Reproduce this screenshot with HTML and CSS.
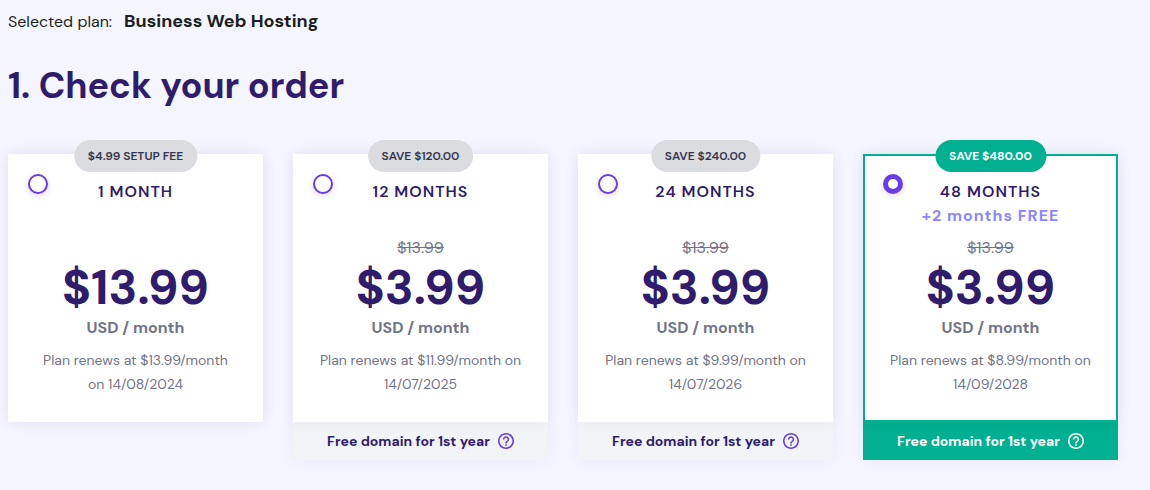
FILE: index.html
```html
<!DOCTYPE html>
<html lang="en">
<head>
<meta charset="utf-8">
<meta name="viewport" content="width=device-width, initial-scale=1">
<title>Check your order</title>
<link rel="stylesheet" href="styles.css">
</head>
<body>
<main class="order">
  <p class="selected-plan">Selected plan: <strong class="plan-name">Business Web Hosting</strong></p>
  <h1 class="heading">1. Check your order</h1>
  <div class="plans">
    <section class="plan">
      <div class="card">
        <span class="badge">$4.99 SETUP FEE</span>
        <div class="card-head">
          <input class="radio" type="radio" name="period" id="period-1">
          <label class="period" for="period-1">1 MONTH</label>
        </div>
        <div class="old-price"></div>
        <div class="price">$13.99</div>
        <div class="unit">USD / month</div>
        <p class="renewal">Plan renews at $13.99/month on 14/08/2024</p>
      </div>
    </section>
    <section class="plan">
      <div class="card">
        <span class="badge">SAVE $120.00</span>
        <div class="card-head">
          <input class="radio" type="radio" name="period" id="period-12">
          <label class="period" for="period-12">12 MONTHS</label>
        </div>
        <div class="old-price"><s>$13.99</s></div>
        <div class="price">$3.99</div>
        <div class="unit">USD / month</div>
        <p class="renewal">Plan renews at $11.99/month on 14/07/2025</p>
      </div>
      <div class="perk">Free domain for 1st year
        <button class="help" type="button" aria-label="About the free domain"><svg class="help-icon" viewBox="2 2 20 20" aria-hidden="true"><path d="M11 18h2v-2h-2v2zm1-16C6.48 2 2 6.48 2 12s4.48 10 10 10 10-4.48 10-10S17.52 2 12 2zm0 18c-4.41 0-8-3.59-8-8s3.59-8 8-8 8 3.59 8 8-3.59 8-8 8zm0-14c-2.21 0-4 1.79-4 4h2c0-1.1.9-2 2-2s2 .9 2 2c0 2-3 1.75-3 5h2c0-2.25 3-2.5 3-5 0-2.21-1.79-4-4-4z"/></svg></button>
      </div>
    </section>
    <section class="plan">
      <div class="card">
        <span class="badge">SAVE $240.00</span>
        <div class="card-head">
          <input class="radio" type="radio" name="period" id="period-24">
          <label class="period" for="period-24">24 MONTHS</label>
        </div>
        <div class="old-price"><s>$13.99</s></div>
        <div class="price">$3.99</div>
        <div class="unit">USD / month</div>
        <p class="renewal">Plan renews at $9.99/month on 14/07/2026</p>
      </div>
      <div class="perk">Free domain for 1st year
        <button class="help" type="button" aria-label="About the free domain"><svg class="help-icon" viewBox="2 2 20 20" aria-hidden="true"><path d="M11 18h2v-2h-2v2zm1-16C6.48 2 2 6.48 2 12s4.48 10 10 10 10-4.48 10-10S17.52 2 12 2zm0 18c-4.41 0-8-3.59-8-8s3.59-8 8-8 8 3.59 8 8-3.59 8-8 8zm0-14c-2.21 0-4 1.79-4 4h2c0-1.1.9-2 2-2s2 .9 2 2c0 2-3 1.75-3 5h2c0-2.25 3-2.5 3-5 0-2.21-1.79-4-4-4z"/></svg></button>
      </div>
    </section>
    <section class="plan plan-active">
      <div class="card">
        <span class="badge">SAVE $480.00</span>
        <div class="card-head">
          <input class="radio" type="radio" name="period" id="period-48" checked>
          <label class="period" for="period-48">48 MONTHS <span class="bonus">+2 months FREE</span></label>
        </div>
        <div class="old-price"><s>$13.99</s></div>
        <div class="price">$3.99</div>
        <div class="unit">USD / month</div>
        <p class="renewal">Plan renews at $8.99/month on 14/09/2028</p>
      </div>
      <div class="perk">Free domain for 1st year
        <button class="help" type="button" aria-label="About the free domain"><svg class="help-icon" viewBox="2 2 20 20" aria-hidden="true"><path d="M11 18h2v-2h-2v2zm1-16C6.48 2 2 6.48 2 12s4.48 10 10 10 10-4.48 10-10S17.52 2 12 2zm0 18c-4.41 0-8-3.59-8-8s3.59-8 8-8 8 3.59 8 8-3.59 8-8 8zm0-14c-2.21 0-4 1.79-4 4h2c0-1.1.9-2 2-2s2 .9 2 2c0 2-3 1.75-3 5h2c0-2.25 3-2.5 3-5 0-2.21-1.79-4-4-4z"/></svg></button>
      </div>
    </section>
  </div>
</main>
</body>
</html>
```
FILE: styles.css
```css
* {
  box-sizing: border-box;
}

body {
  margin: 0;
  background: #f4f5ff;
  color: #1d1e20;
  font-family: "DM Sans", Inter, sans-serif;
  font-size: 16px;
  font-optical-sizing: none;
  line-height: 24px;
}

.order {
  padding: 9px 32px 30px 8px;
}

.selected-plan {
  display: flex;
  align-items: baseline;
  gap: 12px;
  margin: 0;
  font-weight: 400;
}

.plan-name {
  font-size: 18px;
  font-weight: 700;
}

.heading {
  margin: 28px 0 44px;
  color: #2f1c6a;
  font-size: 36px;
  font-weight: 700;
  line-height: 48px;
}

.plans {
  display: grid;
  grid-template-columns: repeat(4, minmax(0, 1fr));
  align-items: start;
  gap: 30px;
}

.plan {
  box-shadow: 0 0 16px rgba(29, 30, 80, 0.05);
  text-align: center;
}

.card {
  position: relative;
  padding: 20px 20px 26px;
  background: #fff;
  box-shadow: 0 0 16px rgba(29, 30, 80, 0.04);
}

.badge {
  position: absolute;
  top: -14px;
  left: 50%;
  transform: translateX(-50%);
  padding: 4px 14px;
  border-radius: 16px;
  background: #dadce0;
  color: #36344d;
  font-size: 12px;
  font-weight: 600;
  white-space: nowrap;
}

.card-head {
  display: grid;
  grid-template-columns: 20px 1fr 20px;
  align-items: start;
  min-height: 54px;
}

.radio {
  appearance: none;
  width: 20px;
  height: 20px;
  margin: 0;
  border: 2px solid #673de6;
  border-radius: 50%;
  background: #fff;
  box-shadow: 0 2px 6px rgba(103, 61, 230, 0.2);
}

.radio:checked {
  border-width: 5px;
}

.period {
  margin-top: 6px;
  color: #2f1c6a;
  font-weight: 600;
  letter-spacing: 1px;
}

.bonus {
  display: block;
  color: #8c85ff;
  font-weight: 700;
}

.old-price {
  height: 24px;
  margin-top: 8px;
  color: #727586;
  font-weight: 400;
}

.price {
  color: #2f1c6a;
  font-size: 48px;
  font-weight: 700;
  line-height: 56px;
}

.unit {
  color: #727586;
  font-weight: 700;
}

.renewal {
  margin: 8px 6px 0;
  color: #727586;
  font-size: 14px;
  font-weight: 400;
}

.perk {
  display: flex;
  align-items: center;
  justify-content: center;
  gap: 8px;
  padding: 7px 8px;
  background: #f2f3f6;
  color: #2f1c6a;
  font-size: 14px;
  font-weight: 700;
}

.help {
  display: flex;
  padding: 0;
  border: 0;
  background: none;
  color: #673de6;
  cursor: pointer;
}

.help-icon {
  width: 16px;
  height: 16px;
  fill: currentColor;
}

.plan-active .card {
  padding: 18px 18px 24px;
  border: 2px solid #00b090;
}

.plan-active .badge {
  top: -16px;
  background: #00b090;
  color: #fff;
  font-weight: 700;
}

.plan-active .perk {
  background: #00b090;
  color: #fff;
}

.plan-active .help {
  color: #fff;
}
```
